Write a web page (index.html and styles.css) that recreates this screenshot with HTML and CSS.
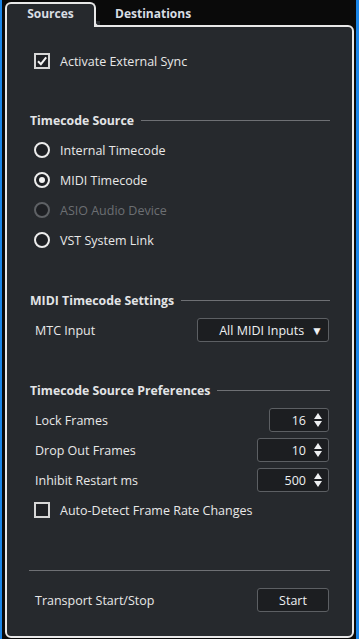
FILE: index.html
```html
<!DOCTYPE html>
<html lang="en">
  <head>
    <meta charset="utf-8" />
    <meta name="viewport" content="width=device-width, initial-scale=1.0" />
    <title>Sync Settings</title>
    <link rel="stylesheet" href="styles.css">
  </head>

  <body>
    <div class="window">
      <div class="tabs">
        <div class="tab active">Sources</div>
        <div class="tab">Destinations</div>
      </div>
      <div class="panel">
        <label class="row check-row">
          <span class="checkbox checked">
            <svg viewBox="0 0 16 16" width="16" height="16">
              <path d="M4 8.2 L6.9 11.2 L12.2 4.4" fill="none" stroke="#f2f2f2" stroke-width="2" />
            </svg>
          </span>
          Activate External Sync
        </label>

        <div class="section">
          <div class="heading">Timecode Source</div>
          <div class="row radio-row"><span class="radio"></span>Internal Timecode</div>
          <div class="row radio-row"><span class="radio selected"></span>MIDI Timecode</div>
          <div class="row radio-row disabled"><span class="radio"></span>ASIO Audio Device</div>
          <div class="row radio-row"><span class="radio"></span>VST System Link</div>
        </div>

        <div class="section">
          <div class="heading">MIDI Timecode Settings</div>
          <div class="row field-row">
            <span class="label">MTC Input</span>
            <div class="dropdown">All MIDI Inputs <span class="caret">&#9660;</span></div>
          </div>
        </div>

        <div class="section">
          <div class="heading">Timecode Source Preferences</div>
          <div class="row field-row">
            <span class="label">Lock Frames</span>
            <div class="spin narrow">16 <span class="arrows"><i class="up"></i><i class="down"></i></span></div>
          </div>
          <div class="row field-row">
            <span class="label">Drop Out Frames</span>
            <div class="spin">10 <span class="arrows"><i class="up"></i><i class="down"></i></span></div>
          </div>
          <div class="row field-row">
            <span class="label">Inhibit Restart ms</span>
            <div class="spin">500 <span class="arrows"><i class="up"></i><i class="down"></i></span></div>
          </div>
          <label class="row check-row">
            <span class="checkbox"></span>
            Auto-Detect Frame Rate Changes
          </label>
        </div>

        <div class="footer">
          <div class="rule"></div>
          <div class="row field-row">
            <span class="label">Transport Start/Stop</span>
            <div class="button">Start</div>
          </div>
        </div>
      </div>
    </div>
  </body>
</html>
```

FILE: styles.css
```css
body {
  margin: 0;
  background: #0a0a0a;
  font-family: "Open Sans", "Noto Sans", sans-serif;
  font-size: 12.5px;
  color: #e8e8e8;
}

.window {
  box-sizing: border-box;
  display: flex;
  flex-direction: column;
  width: 359px;
  height: 639px;
  padding: 2px 2px 1px 3px;
  border-left: 2px solid #1b86e8;
  border-right: 3px solid #1b86e8;
}

.tabs {
  display: flex;
  height: 23px;
  position: relative;
  z-index: 1;
}

.tab {
  box-sizing: border-box;
  width: 91px;
  padding-top: 3px;
  text-align: center;
  font-size: 12px;
  font-weight: 700;
  color: #d8dde3;
}

.tab + .tab {
  width: auto;
  padding-left: 19px;
}

.tab.active {
  position: relative;
  height: 25px;
  border: 2px solid #e8e8e8;
  border-bottom: none;
  border-radius: 6px 6px 0 0;
  background: #26292d;
  padding-top: 1px;
}

/* flared corner where the tab meets the panel */
.tab.active::after {
  content: "";
  position: absolute;
  right: -6px;
  bottom: 0;
  width: 4px;
  height: 4px;
  border-left: 2px solid #e8e8e8;
  border-bottom: 2px solid #e8e8e8;
  border-radius: 0 0 0 4px;
  background: #26292d;
}

.panel {
  box-sizing: border-box;
  flex: 1;
  display: flex;
  flex-direction: column;
  padding: 19px 23px 21px 23px;
  border: 2px solid #e8e8e8;
  border-radius: 0 6px 6px 6px;
  background: #26292d;
}

.row {
  display: flex;
  align-items: center;
  height: 30px;
  padding-left: 4px;
}

.check-row,
.radio-row {
  gap: 10px;
}

.section {
  margin-top: 29px;
}

.section + .section {
  margin-top: 30px;
}

.heading {
  display: flex;
  align-items: center;
  height: 30px;
  font-size: 12.3px;
  font-weight: 700;
  color: #e2e4e6;
}

.heading::after {
  content: "";
  flex: 1;
  height: 1px;
  margin-left: 7px;
  margin-right: -1px;
  background: #6e7074;
}

.checkbox {
  box-sizing: border-box;
  display: flex;
  align-items: center;
  justify-content: center;
  width: 16px;
  height: 16px;
  border: 2px solid #d6d6d6;
  background: #1e2024;
}

.checkbox svg {
  flex: none;
}

.radio {
  box-sizing: border-box;
  width: 16px;
  height: 16px;
  border: 2px solid #ececec;
  border-radius: 50%;
  background: #1e2024;
  position: relative;
}

.radio.selected::after {
  content: "";
  position: absolute;
  left: 3px;
  top: 3px;
  width: 6px;
  height: 6px;
  border-radius: 50%;
  background: #f2f2f2;
}

.disabled {
  color: #6c6f73;
}

.disabled .radio {
  border-color: #5e6165;
}

.field-row {
  justify-content: space-between;
  padding-left: 5px;
  padding-right: 0;
}

.dropdown,
.spin,
.button {
  box-sizing: border-box;
  display: flex;
  align-items: center;
  height: 24px;
  border: 1px solid #5c5f63;
  border-radius: 3px;
  background: #1c1e21;
  color: #eef0f2;
}

.dropdown {
  width: 132px;
  justify-content: flex-end;
  padding-right: 5px;
  gap: 7px;
}

.caret {
  font-size: 12px;
}

.spin {
  width: 72px;
  justify-content: flex-end;
  padding-right: 6px;
  gap: 8px;
}

.spin.narrow {
  width: 60px;
}

.arrows {
  display: flex;
  flex-direction: column;
  gap: 2px;
}

.arrows i {
  width: 0;
  height: 0;
  border-left: 4px solid transparent;
  border-right: 4px solid transparent;
}

.arrows .up {
  border-bottom: 6px solid #eef0f2;
}

.arrows .down {
  border-top: 6px solid #eef0f2;
}

.button {
  width: 72px;
  justify-content: center;
}

.footer {
  margin-top: auto;
}

.rule {
  height: 1px;
  margin-left: -1px;
  margin-right: -1px;
  margin-bottom: 14px;
  background: #6e7074;
}
```
